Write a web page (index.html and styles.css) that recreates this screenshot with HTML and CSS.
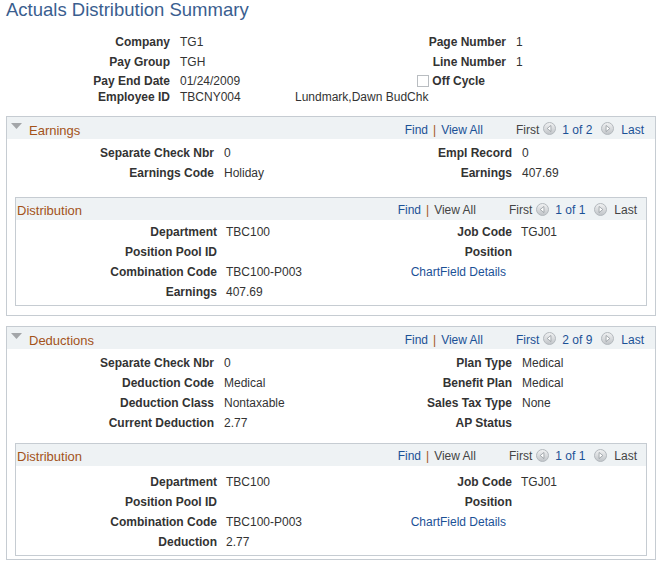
FILE: index.html
```html
<!DOCTYPE html>
<html>
    <head>
        <title>Actuals Distribution Summary</title>
        <link rel="stylesheet" href="styles.css">
    </head>
    <body>
        <svg class="defs" width="0" height="0">
            <defs>
                <linearGradient id="ball" x1="0" y1="0" x2="0" y2="1">
                    <stop offset="0" stop-color="#f2f3f4"/>
                    <stop offset="1" stop-color="#bfc3c7"/>
                </linearGradient>
            </defs>
        </svg>

        <h1 class="page-title">Actuals Distribution Summary</h1>

        <div class="key-grid">
            <div class="lbl">Company</div><div class="val">TG1</div>
            <div class="lbl">Page Number</div><div class="val">1</div>

            <div class="lbl">Pay Group</div><div class="val">TGH</div>
            <div class="lbl">Line Number</div><div class="val">1</div>

            <div class="lbl">Pay End Date</div><div class="val">01/24/2009</div>
            <div class="check-cell"><span class="checkbox"></span><span class="lbl">Off Cycle</span></div><div></div>

            <div class="lbl">Employee ID</div><div class="val">TBCNY004</div>
            <div class="val">Lundmark,Dawn BudChk</div><div></div>
        </div>

        <!-- earnings -->
        <div class="box box-earn">
            <div class="box-hd">
                <svg class="toggle" width="11" height="6" viewBox="0 0 11 6"><polygon points="0,0 11,0 5.5,6" fill="#a3a6a9"/></svg>
                <span class="box-title">Earnings</span>
                <div class="nav">
                    <a class="lnk">Find</a><span class="sep">|</span><a class="lnk">View All</a>
                    <span class="off first">First</span>
                    <svg class="arrow" width="13" height="13" viewBox="0 0 13 13"><circle cx="6.5" cy="6.5" r="6" fill="url(#ball)" stroke="#b3b8bd"/><polygon points="7.9,3.5 4.2,6.5 7.9,9.5" fill="#fff" stroke="#8a9096" stroke-width="0.7"/></svg>
                    <span class="lnk count">1 of 2</span>
                    <svg class="arrow" width="13" height="13" viewBox="0 0 13 13"><circle cx="6.5" cy="6.5" r="6" fill="url(#ball)" stroke="#b3b8bd"/><polygon points="5.1,3.5 8.8,6.5 5.1,9.5" fill="#fff" stroke="#8a9096" stroke-width="0.7"/></svg>
                    <a class="lnk last">Last</a>
                </div>
            </div>
            <div class="fields">
                <div class="lbl">Separate Check Nbr</div><div class="val">0</div>
                <div class="lbl">Empl Record</div><div class="val">0</div>
                <div class="lbl">Earnings Code</div><div class="val">Holiday</div>
                <div class="lbl">Earnings</div><div class="val">407.69</div>
            </div>

            <div class="box dist dist-earn">
                <div class="box-hd">
                    <span class="box-title">Distribution</span>
                    <div class="nav">
                        <a class="lnk">Find</a><span class="sep">|</span><span class="off">View All</span>
                        <span class="off first">First</span>
                        <svg class="arrow" width="13" height="13" viewBox="0 0 13 13"><circle cx="6.5" cy="6.5" r="6" fill="url(#ball)" stroke="#b3b8bd"/><polygon points="7.9,3.5 4.2,6.5 7.9,9.5" fill="#fff" stroke="#8a9096" stroke-width="0.7"/></svg>
                        <span class="lnk count">1 of 1</span>
                        <svg class="arrow" width="13" height="13" viewBox="0 0 13 13"><circle cx="6.5" cy="6.5" r="6" fill="url(#ball)" stroke="#b3b8bd"/><polygon points="5.1,3.5 8.8,6.5 5.1,9.5" fill="#fff" stroke="#8a9096" stroke-width="0.7"/></svg>
                        <span class="off last">Last</span>
                    </div>
                </div>
                <div class="fields">
                    <div class="lbl">Department</div><div class="val">TBC100</div>
                    <div class="lbl">Job Code</div><div class="val">TGJ01</div>
                    <div class="lbl">Position Pool ID</div><div class="val"></div>
                    <div class="lbl">Position</div><div class="val"></div>
                    <div class="lbl">Combination Code</div><div class="val">TBC100-P003</div>
                    <div class="chart"><a class="lnk">ChartField Details</a></div><div class="val"></div>
                    <div class="lbl">Earnings</div><div class="val">407.69</div>
                </div>
            </div>
        </div>

        <!-- deductions -->
        <div class="box box-ded">
            <div class="box-hd">
                <svg class="toggle" width="11" height="6" viewBox="0 0 11 6"><polygon points="0,0 11,0 5.5,6" fill="#a3a6a9"/></svg>
                <span class="box-title">Deductions</span>
                <div class="nav">
                    <a class="lnk">Find</a><span class="sep">|</span><a class="lnk">View All</a>
                    <a class="lnk first">First</a>
                    <svg class="arrow" width="13" height="13" viewBox="0 0 13 13"><circle cx="6.5" cy="6.5" r="6" fill="url(#ball)" stroke="#b3b8bd"/><polygon points="7.9,3.5 4.2,6.5 7.9,9.5" fill="#fff" stroke="#8a9096" stroke-width="0.7"/></svg>
                    <span class="lnk count">2 of 9</span>
                    <svg class="arrow" width="13" height="13" viewBox="0 0 13 13"><circle cx="6.5" cy="6.5" r="6" fill="url(#ball)" stroke="#b3b8bd"/><polygon points="5.1,3.5 8.8,6.5 5.1,9.5" fill="#fff" stroke="#8a9096" stroke-width="0.7"/></svg>
                    <a class="lnk last">Last</a>
                </div>
            </div>
            <div class="fields">
                <div class="lbl">Separate Check Nbr</div><div class="val">0</div>
                <div class="lbl">Plan Type</div><div class="val">Medical</div>
                <div class="lbl">Deduction Code</div><div class="val">Medical</div>
                <div class="lbl">Benefit Plan</div><div class="val">Medical</div>
                <div class="lbl">Deduction Class</div><div class="val">Nontaxable</div>
                <div class="lbl">Sales Tax Type</div><div class="val">None</div>
                <div class="lbl">Current Deduction</div><div class="val">2.77</div>
                <div class="lbl">AP Status</div><div class="val"></div>
            </div>

            <div class="box dist dist-ded">
                <div class="box-hd">
                    <span class="box-title">Distribution</span>
                    <div class="nav">
                        <a class="lnk">Find</a><span class="sep">|</span><span class="off">View All</span>
                        <span class="off first">First</span>
                        <svg class="arrow" width="13" height="13" viewBox="0 0 13 13"><circle cx="6.5" cy="6.5" r="6" fill="url(#ball)" stroke="#b3b8bd"/><polygon points="7.9,3.5 4.2,6.5 7.9,9.5" fill="#fff" stroke="#8a9096" stroke-width="0.7"/></svg>
                        <span class="lnk count">1 of 1</span>
                        <svg class="arrow" width="13" height="13" viewBox="0 0 13 13"><circle cx="6.5" cy="6.5" r="6" fill="url(#ball)" stroke="#b3b8bd"/><polygon points="5.1,3.5 8.8,6.5 5.1,9.5" fill="#fff" stroke="#8a9096" stroke-width="0.7"/></svg>
                        <span class="off last">Last</span>
                    </div>
                </div>
                <div class="fields">
                    <div class="lbl">Department</div><div class="val">TBC100</div>
                    <div class="lbl">Job Code</div><div class="val">TGJ01</div>
                    <div class="lbl">Position Pool ID</div><div class="val"></div>
                    <div class="lbl">Position</div><div class="val"></div>
                    <div class="lbl">Combination Code</div><div class="val">TBC100-P003</div>
                    <div class="chart"><a class="lnk">ChartField Details</a></div><div class="val"></div>
                    <div class="lbl">Deduction</div><div class="val">2.77</div>
                </div>
            </div>
        </div>
    </body>
</html>
```

FILE: styles.css
```css
body {
    margin: 0;
    padding: 0 6px;
    font-family: "Liberation Sans", Arial, sans-serif;
    font-size: 12px;
    color: #333;
    background: #fff;
}
.defs {
    position: absolute;
}
.page-title {
    margin: 0;
    font-size: 18.5px;
    font-weight: normal;
    line-height: 20px;
    color: #3a5e8f;
}
.lbl {
    font-weight: bold;
    text-align: right;
    white-space: nowrap;
}
.val {
    white-space: nowrap;
}
.lnk {
    color: #1b5196;
    text-decoration: none;
}
.off {
    color: #444;
}

/* key fields at the top */
.key-grid {
    display: grid;
    grid-template-columns: 164px 105px 211px 1fr;
    grid-template-rows: 20px 19px 19px 14px;
    column-gap: 10px;
    align-items: center;
    line-height: 20px;
    margin-top: 12px;
}
.check-cell {
    display: flex;
    justify-content: flex-end;
    align-items: center;
    padding-right: 21px;
}
.checkbox {
    width: 10px;
    height: 10px;
    border: 1px solid #b9bdc1;
    background: #fff;
    margin-right: 3px;
}

/* group boxes */
.box {
    border: 1px solid #c6ccd2;
    background: #fff;
    box-sizing: border-box;
}
.box-earn,
.box-ded {
    width: 650px;
}
.box-earn {
    margin-top: 12px;
    padding-bottom: 9px;
}
.box-ded {
    margin-top: 10px;
    padding-bottom: 3px;
}
.box-hd {
    display: flex;
    align-items: center;
    height: 22px;
    padding: 4px 11px 0 4px;
    box-sizing: border-box;
    background: #eef2f4;
    line-height: 17px;
}
.toggle {
    align-self: flex-start;
    margin-top: 2px;
    margin-right: 7px;
}
.box-title {
    font-size: 13px;
    color: #a3521a;
}
.nav {
    margin-left: auto;
    display: flex;
    align-items: center;
    white-space: nowrap;
}
.sep {
    color: #a3521a;
    margin: 0 5px;
}
.first {
    margin-left: 33px;
}
.arrow {
    margin: -4px 0 0 4px;
}
.count {
    margin: 0 5px 0 6px;
}
.last {
    margin-left: 7px;
}

.fields {
    display: grid;
    grid-template-columns: 207px 120px 158px 1fr;
    grid-auto-rows: 20px;
    column-gap: 10px;
    line-height: 20px;
    padding-top: 4px;
}

/* nested distribution boxes */
.dist {
    margin: 0 8px;
    padding-bottom: 3px;
}
.dist-earn {
    margin-top: 14px;
}
.dist-ded {
    margin-top: 10px;
}
.dist .box-hd {
    padding: 3px 9px 0 1px;
}
.dist .arrow {
    margin-top: -3px;
}
.dist .fields {
    grid-template-columns: 201px 120px 157px 1fr;
    column-gap: 9px;
    padding-top: 2px;
}
.dist-ded .fields {
    padding-top: 6px;
}
.chart {
    grid-column: 3;
    text-align: right;
    padding-right: 6px;
    white-space: nowrap;
}
```
